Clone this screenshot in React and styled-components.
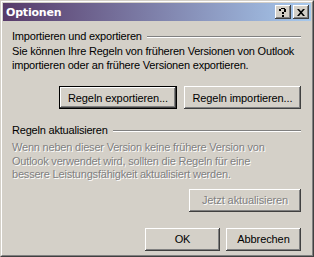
import React from 'react';
import styled, { createGlobalStyle } from 'styled-components';

const Global = createGlobalStyle`
  html, body { margin: 0; padding: 0; background: #d4d0c8; }
  body { font-family: "Liberation Sans", Arial, sans-serif; font-size: 11px; color: #000; }
`;

const Window = styled.div`
  width: 314px;
  height: 257px;
  box-sizing: border-box;
  background: #d4d0c8;
  border: 1px solid;
  border-color: #d4d0c8 #404040 #404040 #d4d0c8;
  display: flex;
  flex-direction: column;
`;

const Frame = styled.div`
  flex: 1;
  display: flex;
  flex-direction: column;
  border: 1px solid;
  border-color: #fff #808080 #808080 #fff;
  padding: 1px;
`;

const TitleBar = styled.div`
  height: 18px;
  display: flex;
  align-items: center;
  padding: 0 2px 0 3px;
  background: linear-gradient(to right, #573a69, #a7c9ed);
  color: #fff;
  font-family: "DejaVu Sans", Tahoma, sans-serif;
  font-weight: bold;
  font-size: 11px;
  letter-spacing: -0.2px;
`;

const Title = styled.span`
  flex: 1;
`;

const CaptionBtn = styled.div`
  width: 16px;
  height: 14px;
  box-sizing: border-box;
  margin-left: ${p => p.$gap || 0}px;
  background: #d4d0c8;
  box-shadow: inset -1px -1px #404040, inset 1px 1px #fff, inset -2px -2px #808080;
  display: flex;
  align-items: center;
  justify-content: center;
  color: #000;
  svg { display: block; }
`;

const Content = styled.div`
  flex: 1;
  display: flex;
  flex-direction: column;
  padding: 9px 10px 0 9px;
  letter-spacing: -0.2px;
`;

const GroupHead = styled.div`
  display: flex;
  align-items: center;
  height: 13px;
  line-height: 13px;
  margin-top: ${p => p.$top || 0}px;
`;

const Rule = styled.div`
  flex: 1;
  height: 0;
  margin-left: 5px;
  border-top: 1px solid #808080;
  border-bottom: 1px solid #fff;
`;

const Text = styled.p`
  margin: ${p => p.$top || 0}px 0 0 0;
  line-height: 13.5px;
  white-space: nowrap;
  color: ${p => (p.$disabled ? '#808080' : '#000')};
  text-shadow: ${p => (p.$disabled ? '1px 1px 0 #fff' : 'none')};
`;

const ButtonRow = styled.div`
  display: flex;
  justify-content: flex-end;
  gap: ${p => p.$gap || 7}px;
  margin-top: ${p => p.$top || 0}px;
`;

const Button = styled.button`
  width: ${p => p.$w}px;
  height: ${p => p.$h || 23}px;
  padding: 0;
  font-family: "Liberation Sans", Arial, sans-serif;
  font-size: 11px;
  letter-spacing: -0.1px;
  color: ${p => (p.disabled ? '#808080' : '#000')};
  text-shadow: ${p => (p.disabled ? '1px 1px 0 #fff' : 'none')};
  background: #d4d0c8;
  border: ${p => (p.$default ? '1px solid #000' : 'none')};
  box-shadow: ${p =>
    p.$default
      ? 'inset -1px -1px #404040, inset 1px 1px #fff, inset -2px -2px #808080'
      : 'inset -1px -1px #404040, inset 1px 1px #fff, inset -2px -2px #808080, inset 2px 2px #d4d0c8'};
  box-sizing: border-box;
  outline: none;
`;

export default function App() {
  return (
    <>
      <Global />
      <Window>
        <Frame>
          <TitleBar>
            <Title>Optionen</Title>
            <CaptionBtn>
              <svg width="8" height="9" viewBox="0 0 8 9">
                <path d="M1 1h1v1H1zM2 0h4v1H2zM6 1h1v2H6zM5 3h1v1H5zM4 4h1v2H4zM3 4h1v2H3zM3 7h2v2H3z" fill="#000" />
                <path d="M0 1h2v2H0zM5 1h2v3H5z" fill="#000" />
              </svg>
            </CaptionBtn>
            <CaptionBtn $gap={2}>
              <svg width="8" height="7" viewBox="0 0 8 7">
                <path d="M0 0h2l2 2.3L6 0h2L5 3.5 8 7H6L4 4.7 2 7H0l3-3.5z" fill="#000" />
              </svg>
            </CaptionBtn>
          </TitleBar>
          <Content>
            <GroupHead>
              Importieren und exportieren
              <Rule />
            </GroupHead>
            <Text $top={2}>
              Sie können Ihre Regeln von früheren Versionen von Outlook<br />
              importieren oder an frühere Versionen exportieren.
            </Text>
            <ButtonRow $top={14}>
              <Button $w={118} $default>Regeln exportieren...</Button>
              <Button $w={117}>Regeln importieren...</Button>
            </ButtonRow>
            <GroupHead $top={15}>
              Regeln aktualisieren
              <Rule />
            </GroupHead>
            <Text $top={4} $disabled>
              Wenn neben dieser Version keine frühere Version von<br />
              Outlook verwendet wird, sollten die Regeln für eine<br />
              bessere Leistungsfähigkeit aktualisiert werden.
            </Text>
            <ButtonRow $top={7}>
              <Button $w={112} disabled>Jetzt aktualisieren</Button>
            </ButtonRow>
            <ButtonRow $top={16} $gap={6}>
              <Button $w={75} $h={23}>OK</Button>
              <Button $w={75} $h={23}>Abbrechen</Button>
            </ButtonRow>
          </Content>
        </Frame>
      </Window>
    </>
  );
}
